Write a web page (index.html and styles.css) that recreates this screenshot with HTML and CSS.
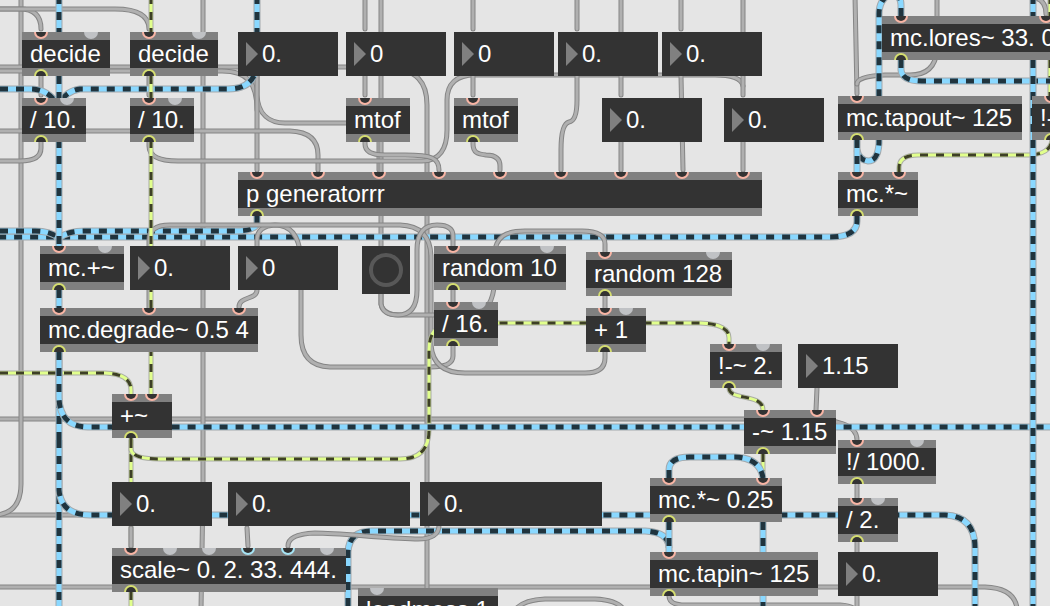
FILE: index.html
```
<!DOCTYPE html>
<html lang="en">
<head>
<meta charset="utf-8">
<title>Patcher</title>
<link rel="stylesheet" href="styles.css">
</head>
<body>
<main class="patcher">
  <svg class="cables" id="cables" aria-hidden="true"></svg>

  <div class="object at-decide-a">decide</div>
  <div class="object at-decide-b">decide</div>
  <div class="object at-div-a">/ 10.</div>
  <div class="object at-div-b">/ 10.</div>
  <div class="object at-mtof-a">mtof</div>
  <div class="object at-mtof-b">mtof</div>
  <div class="object at-generator">p generatorrr</div>
  <div class="object at-lores">mc.lores~ 33. 0</div>
  <div class="object at-tapout">mc.tapout~ 125</div>
  <div class="object at-rminus">!-</div>
  <div class="object at-mul">mc.*~</div>
  <div class="object at-mcplus">mc.+~</div>
  <div class="object at-degrade">mc.degrade~ 0.5 4</div>
  <div class="object at-random-a">random 10</div>
  <div class="object at-random-b">random 128</div>
  <div class="object at-div-c">/ 16.</div>
  <div class="object at-plus-one">+ 1</div>
  <div class="object at-rminus-two">!-~ 2.</div>
  <div class="object at-sum">+~</div>
  <div class="object at-minus">-~ 1.15</div>
  <div class="object at-rdiv">!/ 1000.</div>
  <div class="object at-mul-quarter">mc.*~ 0.25</div>
  <div class="object at-div-two">/ 2.</div>
  <div class="object at-scale">scale~ 0. 2. 33. 444.</div>
  <div class="object at-tapin">mc.tapin~ 125</div>
  <div class="object at-loadmess">loadmess 1</div>

  <label class="number at-num-a"><input type="text" value="0." aria-label="Generator value 1"></label>
  <label class="number at-num-b"><input type="text" value="0" aria-label="Note 1"></label>
  <label class="number at-num-c"><input type="text" value="0" aria-label="Note 2"></label>
  <label class="number at-num-d"><input type="text" value="0." aria-label="Generator value 6"></label>
  <label class="number at-num-e"><input type="text" value="0." aria-label="Generator value 8"></label>
  <label class="number at-num-f"><input type="text" value="0." aria-label="Generator value 7"></label>
  <label class="number at-num-g"><input type="text" value="0." aria-label="Generator value 9"></label>
  <label class="number at-num-h"><input type="text" value="0." aria-label="Degrade rate"></label>
  <label class="number at-num-i"><input type="text" value="0" aria-label="Degrade bits"></label>
  <label class="number at-num-j"><input type="text" value="1.15" aria-label="Offset"></label>
  <label class="number at-num-k"><input type="text" value="0." aria-label="Scale input"></label>
  <label class="number wide at-num-l"><input type="text" value="0." aria-label="Scale low"></label>
  <label class="number wide at-num-m"><input type="text" value="0." aria-label="Scale high"></label>
  <label class="number at-num-n"><input type="text" value="0." aria-label="Result"></label>

  <button class="bang" type="button" aria-label="Bang"></button>

  <svg class="ports" id="ports" aria-hidden="true"></svg>
</main>
<script src="patcher.js"></script>
</body>
</html>
```
FILE: styles.css
```
*,
*::before {
  box-sizing: border-box;
}

body {
  margin: 0;
  background: #e5e5e5;
  color: #fff;
  font-family: "Liberation Sans", Arial, sans-serif;
  font-size: 24px;
}

.patcher {
  position: relative;
  min-height: 100vh;
  overflow: hidden;
}

/* Cables */
.cables,
.ports {
  position: absolute;
  inset: 0;
  width: 100%;
  height: 100%;
}

.ports {
  pointer-events: none;
}

.cables path {
  fill: none;
}

.control-edge { stroke: #858585; stroke-width: 5; stroke-linecap: round; }
.control-core { stroke: #b0b0b0; stroke-width: 3; stroke-linecap: round; }
.multi-edge { stroke: #a3a9ad; stroke-width: 7; }
.multi-core { stroke: #8ad8ff; stroke-width: 5; }
.multi-dash { stroke: #20343e; stroke-width: 5; stroke-dasharray: 8 8; }
.signal-edge { stroke: #aaada4; stroke-width: 5; }
.signal-core { stroke: #e1ff8c; stroke-width: 3; }
.signal-dash { stroke: #3d3f26; stroke-width: 3; stroke-dasharray: 8 8; }

/* Ports */
.port-well { fill: #333; }
.port-cold { fill: #c0c2c5; }
.port-hot { fill: #f8b5a5; }
.port-float { fill: #a6e4f5; }
.port-out { fill: #d5de70; }

/* Boxes */
.object {
  position: absolute;
  height: 44px;
  padding: 0 8px;
  border-top: 8px solid #808080;
  border-bottom: 8px solid #808080;
  background: #333;
  line-height: 28px;
  white-space: nowrap;
}

.number {
  position: absolute;
  display: flex;
  align-items: center;
  gap: 4px;
  width: 100px;
  height: 44px;
  padding-left: 8px;
  background: #333;
}

.number.wide {
  width: 182px;
}

.number::before {
  content: "";
  flex: none;
  border-top: 12px solid transparent;
  border-bottom: 12px solid transparent;
  border-left: 12px solid #808080;
}

.number input {
  flex: 1;
  min-width: 0;
  height: 28px;
  padding: 0;
  border: 0;
  outline: 0;
  background: transparent;
  color: inherit;
  font: inherit;
}

.bang {
  position: absolute;
  left: 362px;
  top: 246px;
  display: grid;
  place-items: center;
  width: 48px;
  height: 48px;
  padding: 0;
  border: 0;
  background: #333;
}

.bang::before {
  content: "";
  width: 34px;
  height: 34px;
  border: 4px solid #585858;
  border-radius: 50%;
}

/* Places on the canvas */
.at-decide-a { left: 22px; top: 32px; width: 88px; }
.at-decide-b { left: 130px; top: 32px; width: 88px; }
.at-div-a { left: 22px; top: 98px; width: 64px; }
.at-div-b { left: 130px; top: 98px; width: 64px; }
.at-mtof-a { left: 346px; top: 98px; width: 64px; }
.at-mtof-b { left: 454px; top: 98px; width: 64px; }
.at-generator { left: 238px; top: 172px; width: 524px; }
.at-lores { left: 882px; top: 16px; width: 184px; }
.at-tapout { left: 838px; top: 96px; width: 184px; }
.at-rminus { left: 1032px; top: 96px; width: 72px; }
.at-mul { left: 838px; top: 172px; width: 80px; }
.at-mcplus { left: 40px; top: 246px; width: 84px; }
.at-degrade { left: 40px; top: 308px; width: 218px; }
.at-random-a { left: 434px; top: 246px; width: 132px; }
.at-random-b { left: 586px; top: 252px; width: 146px; }
.at-div-c { left: 434px; top: 302px; width: 64px; }
.at-plus-one { left: 586px; top: 308px; width: 60px; }
.at-rminus-two { left: 710px; top: 344px; width: 72px; }
.at-sum { left: 112px; top: 394px; width: 60px; }
.at-minus { left: 744px; top: 410px; width: 92px; }
.at-rdiv { left: 838px; top: 440px; width: 98px; }
.at-mul-quarter { left: 650px; top: 478px; width: 132px; }
.at-div-two { left: 838px; top: 498px; width: 60px; }
.at-scale { left: 112px; top: 548px; width: 234px; }
.at-tapin { left: 650px; top: 552px; width: 168px; }
.at-loadmess { left: 358px; top: 588px; width: 140px; }

.at-num-a { left: 238px; top: 32px; }
.at-num-b { left: 346px; top: 32px; }
.at-num-c { left: 454px; top: 32px; }
.at-num-d { left: 558px; top: 32px; }
.at-num-e { left: 662px; top: 32px; }
.at-num-f { left: 602px; top: 98px; }
.at-num-g { left: 724px; top: 98px; }
.at-num-h { left: 130px; top: 246px; }
.at-num-i { left: 238px; top: 246px; }
.at-num-j { left: 798px; top: 344px; }
.at-num-k { left: 112px; top: 482px; }
.at-num-l { left: 228px; top: 482px; }
.at-num-m { left: 420px; top: 482px; }
.at-num-n { left: 838px; top: 552px; }
```
FILE: patcher.js
```
// Patch cords, back to front: kind, path.
const cables = [
  ["control", "M0 419H800Q857 418 857 440"],
  ["control", "M0 515H90"],
  ["control", "M0 587H985Q1014 588 1017 608"],
  ["control", "M21 -4V484Q21 513 -4 515"],
  ["control", "M203 -4V490L201 610"],
  ["control", "M0 9H20Q41 9 41 29"],
  ["control", "M0 9H115Q149 9 149 29"],
  ["control", "M0 67H380C420 67 427 85 427 105V590"],
  ["control", "M0 71H222C248 71 257 84 257 110"],
  ["control", "M257 70V95C258 115 270 123 285 123H355Q379 124 379 142V170"],
  ["control", "M257 76V170"],
  ["control", "M0 131H290Q318 132 318 155V170"],
  ["control", "M41 142V148Q41 161 20 161H-4"],
  ["control", "M381 -4V246"],
  ["control", "M149 142V146C149 157 160 161 178 161H422C440 161 447 148 447 130V100C447 84 456 75 475 75H715Q741 75 743 86"],
  ["control", "M365 142V144C365 152 372 155 385 155H405C432 155 439 158 439 170"],
  ["control", "M473 142V144C473 153 478 154 486 155C497 155 500 160 500 166V170"],
  ["control", "M41 76V95"],
  ["control", "M149 76V95"],
  ["control", "M365 -4V29"],
  ["control", "M365 76V95"],
  ["control", "M473 -4V29"],
  ["control", "M473 76V95"],
  ["control", "M577 -4V29"],
  ["control", "M621 -4V95"],
  ["control", "M681 -4V29"],
  ["control", "M743 -4V95"],
  ["control", "M577 76V100Q577 121 569 122Q561 124 561 150V170"],
  ["control", "M621 140V170"],
  ["control", "M681 76L683 170"],
  ["control", "M743 140V170"],
  ["control", "M855 -4L857 94"],
  ["control", "M937 -4V50Q935 75 910 75H885Q857 76 857 84"],
  ["control", "M1036 -2Q1046 1 1046 14"],

  ["multi", "M0 89H30Q48 89 57 104"],
  ["signal", "M1050 -4V96"],
  ["multi", "M257 -4V60Q257 89 228 89H80Q66 91 59 104"],
  ["multi", "M857 216V221Q857 237 830 237H0"],
  ["multi", "M0 231H35Q50 231 59 238"],
  ["multi", "M257 216V222Q257 231 235 231H85Q68 231 59 238"],
  ["multi", "M59 -4V246"],
  ["multi", "M59 290V308"],
  ["signal", "M0 373H105Q131 374 131 390V394"],
  ["multi", "M59 352V606"],
  ["multi", "M59 440V490Q61 515 90 515H945Q975 516 975 548V606"],

  ["control", "M453 346V356Q453 367 430 367H330Q301 366 301 335V265C301 235 290 225 275 225Q257 226 257 240V246"],
  ["control", "M257 290C257 300 239 296 239 307"],
  ["control", "M149 308V240Q149 225 170 225H400Q431 226 431 258V345Q433 373 465 373H585Q605 373 605 358V352"],
  ["control", "M381 294V304Q383 315 400 315H470Q490 315 494 288V255C496 236 506 231 525 231H582Q605 231 605 244V252"],
  ["control", "M381 294V304Q383 315 398 315Q417 315 417 290V250Q417 225 437 225Q453 225 453 236V246"],
  ["control", "M453 290V302"],
  ["control", "M605 296V308"],
  ["control", "M817 388L816 410"],
  ["control", "M857 484V498"],
  ["control", "M857 542V552"],
  ["control", "M857 596V610"],
  ["control", "M669 596Q669 605 685 605H840Q857 606 857 614"],
  ["control", "M515 610Q523 600 545 599H595Q618 600 624 610"],

  ["signal", "M131 438V548"],
  ["signal", "M131 440V450Q133 459 160 459H400Q429 459 429 430V350Q429 323 455 323H700Q729 324 729 338V344"],
  ["signal", "M151 -4V394"],
  ["signal", "M729 388C729 401 763 393 763 410"],
  ["signal", "M763 454V478"],
  ["signal", "M899 172V168Q899 155 918 155H1030Q1050 154 1052 140"],
  ["signal", "M131 592V606"],
  ["multi", "M59 352V398Q60 427 88 427H1050"],
  ["multi", "M763 522V606"],
  ["multi", "M348 606V552Q349 531 372 531H645Q669 532 669 548"],
  ["multi", "M669 522V552"],
  ["multi", "M669 478V470Q669 457 690 457H735Q760 458 763 478"],
  ["multi", "M901 60V70Q902 81 922 81H1050"],
  ["multi", "M901 16V5Q901 -6 890 -6Q879 0 879 14V143Q878 161 868 161Q859 160 857 150"],
  ["multi", "M857 140V172"],
  ["multi", "M1033 -4V606"],
  ["control", "M131 528V546"],
  ["control", "M247 528L248 546"],
  ["control", "M439 524Q440 540 415 539C380 538 340 533 315 533Q288 534 288 546"]
];

// Ports: kind, y of the box edge, x of each centre.
const ports = [
  ["hot", 32, [41, 149]],
  ["cold", 32, [91, 199]],
  ["hot", 98, [41, 149, 365, 473]],
  ["cold", 98, [67, 175]],
  ["hot", 172, [257, 318, 379, 439, 500, 561, 621, 682, 743, 857, 899]],
  ["hot", 16, [901, 1046]],
  ["hot", 96, [857, 1051]],
  ["hot", 246, [59, 453]],
  ["cold", 246, [105, 547]],
  ["hot", 308, [59, 149, 239, 605]],
  ["cold", 308, [626]],
  ["hot", 302, [453]],
  ["cold", 302, [479]],
  ["hot", 252, [605]],
  ["cold", 252, [713]],
  ["hot", 344, [729]],
  ["cold", 344, [763]],
  ["hot", 394, [131, 152]],
  ["hot", 410, [763, 817]],
  ["hot", 440, [857]],
  ["cold", 440, [917]],
  ["hot", 478, [669, 763]],
  ["hot", 498, [857]],
  ["cold", 498, [878]],
  ["hot", 548, [131]],
  ["cold", 548, [170, 209, 327]],
  ["float", 548, [248, 288]],
  ["hot", 552, [669]],
  ["cold", 588, [377]],
  ["out", 76, [41, 149]],
  ["out", 142, [41, 149, 365, 473]],
  ["out", 60, [901]],
  ["out", 140, [857, 1051]],
  ["out", 216, [257, 857]],
  ["out", 290, [59, 453]],
  ["out", 352, [59, 605]],
  ["out", 346, [453]],
  ["out", 296, [605]],
  ["out", 388, [729]],
  ["out", 438, [131]],
  ["out", 454, [763]],
  ["out", 484, [857]],
  ["out", 522, [669]],
  ["out", 542, [857]],
  ["out", 592, [131]],
  ["out", 596, [669]]
];

function addPath(parent, className, d) {
  const path = document.createElementNS("http://www.w3.org/2000/svg", "path");
  path.setAttribute("class", className);
  path.setAttribute("d", d);
  parent.append(path);
}

function halfDisc(x, y, r, sweep) {
  return `M${x - r} ${y}A${r} ${r} 0 0 ${sweep} ${x + r} ${y}Z`;
}

const cableLayer = document.getElementById("cables");
for (const [kind, d] of cables) {
  addPath(cableLayer, `${kind}-edge`, d);
  addPath(cableLayer, `${kind}-core`, d);
  if (kind !== "control") addPath(cableLayer, `${kind}-dash`, d);
}

const portLayer = document.getElementById("ports");
for (const [kind, y, centres] of ports) {
  const sweep = kind === "out" ? 1 : 0;
  for (const x of centres) {
    addPath(portLayer, `port-${kind}`, halfDisc(x, y, 7, sweep));
    if (kind !== "cold") addPath(portLayer, "port-well", halfDisc(x, y, 5, sweep));
  }
}
```
